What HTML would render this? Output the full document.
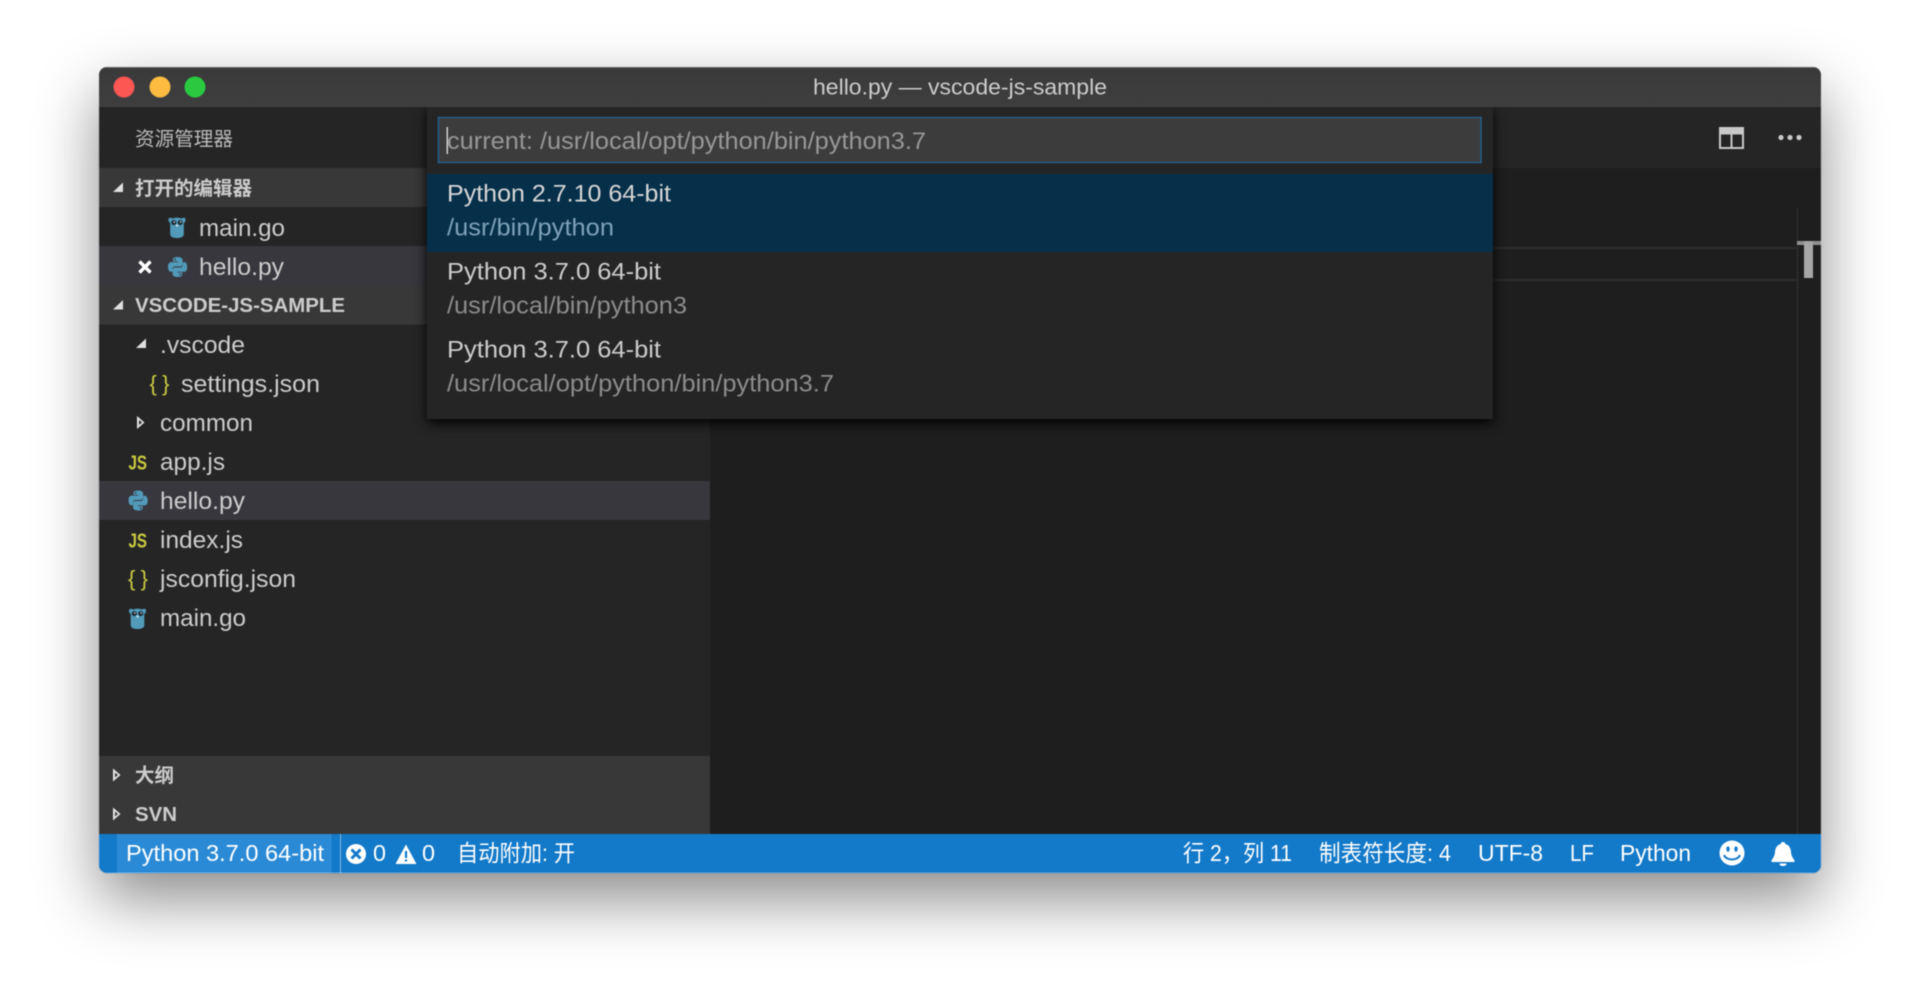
<!DOCTYPE html>
<html><head><meta charset="utf-8"><title>hello.py — vscode-js-sample</title>
<style>
html,body{margin:0;padding:0;width:1920px;height:1004px;background:#fff;overflow:hidden}
#shadow{position:absolute;left:99px;top:67px;width:1722px;height:806px;border-radius:8px;box-shadow:0 26px 62px rgba(0,0,0,.46)}
svg{position:absolute;left:0;top:0;filter:blur(.45px)}
text{font-family:"Liberation Sans","Noto Sans CJK SC",sans-serif;font-size:24px;fill:#ccc}
.b{font-weight:700;font-size:20px}
.s{fill:#fff;font-size:23px}
.q{font-size:24px}
.d{font-size:24px;fill:#8c8c8c}
</style></head><body>
<div id="shadow"></div>
<svg width="1920" height="1004" viewBox="0 0 1920 1004" xmlns="http://www.w3.org/2000/svg">
<defs>
<clipPath id="w"><rect x="99" y="67" width="1722" height="806" rx="8"/></clipPath>
<linearGradient id="tb" x1="0" y1="0" x2="0" y2="1"><stop offset="0" stop-color="#3a3a3a"/><stop offset="1" stop-color="#3e3e3e"/></linearGradient>
<g id="py"><path fill="#519aba" d="M9.6 0C4.7 0 5 2.1 5 2.1v2.3h4.7v.7H3.2S0 4.7 0 9.8s2.8 4.9 2.8 4.9h1.7v-2.4s-.1-2.8 2.8-2.8h4.7s2.6 0 2.6-2.6V2.7S14.6 0 9.6 0zM7 1.5a.9.9 0 1 1 0 1.8.9.9 0 0 1 0-1.8z"/><path fill="#519aba" d="M9.6 20c4.9 0 4.6-2.1 4.6-2.1v-2.3H9.5v-.7H16s3.2.4 3.2-4.7-2.8-4.9-2.8-4.9h-1.7v2.4s.1 2.8-2.8 2.8H7.2s-2.6 0-2.6 2.6v4.2S4.6 20 9.6 20zm2.6-1.5a.9.9 0 1 1 0-1.8.9.9 0 0 1 0 1.8z"/></g>
<g id="go"><path fill="#519aba" d="M2.2 6C-.2 4.500-.2 1.200 2 .8c1-.2 2 .2 2.600.9C5.600 1 7 .6 9 .6s3.400 .4 4.400 1.100C14 1 15 .6 16 .8c2.200 .4 2.200 3.700-.2 5.200V17c0 2.800-2.500 4-6.800 4s-6.800-1.200-6.800-4z"/><circle cx="5.800" cy="5.600" r="2.500" fill="#1f2a33"/><circle cx="12.200" cy="5.600" r="2.500" fill="#1f2a33"/><circle cx="6.300" cy="5" r=".8" fill="#cfe3ee"/><circle cx="12.700" cy="5" r=".8" fill="#cfe3ee"/><rect x="8" y="7.500" width="2" height="2" fill="#cfe3ee"/></g>
<path id="open" d="M10 0V9.500H0z" fill="#e0e0e0"/>
<path id="closed" fill="#e4e4e4" fill-rule="evenodd" d="M0 0L7.500 6.500 0 13zM2 4v5L5 6.500z"/>
</defs>

<g clip-path="url(#w)">
<rect x="99" y="67" width="1722" height="806" fill="#1e1e1e"/>
<!-- sidebar -->
<rect x="99" y="107" width="611" height="727" fill="#252526"/>
<rect x="99" y="168" width="611" height="39" fill="#383838"/>
<rect x="99" y="246" width="611" height="39" fill="#37373d"/>
<rect x="99" y="285" width="611" height="39.500" fill="#383838"/>
<rect x="99" y="481" width="611" height="39" fill="#37373d"/>
<rect x="99" y="756" width="611" height="78" fill="#383838"/>
<!-- editor header -->
<rect x="710" y="107" width="1111" height="61" fill="#252526"/>
<rect x="710" y="247" width="1087" height="2" fill="#2c2c2c"/>
<rect x="710" y="279" width="1087" height="2" fill="#2c2c2c"/>
<rect x="1797" y="208" width="1" height="626" fill="#333"/>
<rect x="1797" y="241" width="24" height="4" fill="#8f8f8f"/>
<rect x="1804" y="241" width="9" height="37" fill="#a6a6a6"/>
<!-- status -->
<rect x="99" y="834" width="1722" height="39" fill="#1379c9"/>
<rect x="117" y="834" width="214.500" height="39" fill="#2a8ad6"/>
<rect x="340" y="834" width="1" height="39" fill="#7fb8e6"/>
</g>

<text x="135" y="145.500" textLength="98" lengthAdjust="spacingAndGlyphs" style="font-size:19.500px;fill:#bbb">资源管理器</text>
<use href="#open" x="113" y="182.500"/>
<text class="b" x="135" y="195" textLength="117" lengthAdjust="spacingAndGlyphs" style="font-size:19.500px">打开的编辑器</text>
<use href="#go" x="168" y="217"/>
<text x="199" y="236" textLength="86" lengthAdjust="spacingAndGlyphs">main.go</text>
<path d="M139.500 261.500L150.500 272.500M150.500 261.500L139.500 272.500" stroke="#fff" stroke-width="3.400" fill="none"/>
<use href="#py" x="168" y="257"/>
<text x="199" y="275" textLength="85" lengthAdjust="spacingAndGlyphs">hello.py</text>
<use href="#open" x="113" y="300"/>
<text class="b" x="135" y="312" textLength="210" lengthAdjust="spacingAndGlyphs">VSCODE-JS-SAMPLE</text>

<use href="#open" x="136" y="338.500"/>
<text x="160" y="353" textLength="85" lengthAdjust="spacingAndGlyphs">.vscode</text>
<text x="149.500" y="391" style="font-size:22px;fill:#cbcb41" textLength="20" lengthAdjust="spacing" xml:space="preserve">{ }</text>
<text x="181" y="392" textLength="139" lengthAdjust="spacingAndGlyphs">settings.json</text>
<use href="#closed" x="137" y="416"/>
<text x="160" y="431" textLength="93" lengthAdjust="spacingAndGlyphs">common</text>
<text x="128.500" y="469.500" style="font-size:20px;fill:#cbcb41;font-weight:700" textLength="18.500" lengthAdjust="spacingAndGlyphs">JS</text>
<text x="160" y="470" textLength="65" lengthAdjust="spacingAndGlyphs">app.js</text>
<use href="#py" x="128.500" y="490.500"/>
<text x="160" y="509" textLength="85" lengthAdjust="spacingAndGlyphs">hello.py</text>
<text x="128.500" y="547.500" style="font-size:20px;fill:#cbcb41;font-weight:700" textLength="18.500" lengthAdjust="spacingAndGlyphs">JS</text>
<text x="160" y="548" textLength="83" lengthAdjust="spacingAndGlyphs">index.js</text>
<text x="128" y="586" style="font-size:22px;fill:#cbcb41" textLength="20" lengthAdjust="spacing" xml:space="preserve">{ }</text>
<text x="160" y="587" textLength="136" lengthAdjust="spacingAndGlyphs">jsconfig.json</text>
<use href="#go" x="128.500" y="608"/>
<text x="160" y="626" textLength="86" lengthAdjust="spacingAndGlyphs">main.go</text>

<use href="#closed" x="113" y="768.500"/>
<text class="b" x="135" y="782" textLength="39" lengthAdjust="spacingAndGlyphs" style="font-size:19.500px">大纲</text>
<use href="#closed" x="113" y="807.500"/>
<text class="b" x="135" y="821" textLength="42" lengthAdjust="spacingAndGlyphs">SVN</text>

<!-- header icons -->
<path d="M1720 128h23v20h-23zM1731.500 134v14M1720 133.500h23" fill="none" stroke="#c8c8c8" stroke-width="2"/>
<rect x="1720" y="128" width="23" height="5" fill="#c8c8c8"/>
<circle cx="1781" cy="137.500" r="2.600" fill="#c8c8c8"/><circle cx="1790" cy="137.500" r="2.600" fill="#c8c8c8"/><circle cx="1799" cy="137.500" r="2.600" fill="#c8c8c8"/>

<!-- quick pick -->
<rect x="427" y="107" width="1066" height="312" fill="#252526" style="filter:drop-shadow(0 4px 6px #000)"/>
<rect x="438.500" y="117.500" width="1042.500" height="45" fill="#3c3c3c" stroke="#215f8b" stroke-width="1.500"/>
<rect x="446.500" y="127" width="1.500" height="27" fill="#d0d0d0"/>
<text x="447" y="149" class="q" textLength="479" lengthAdjust="spacingAndGlyphs" style="fill:#979797">current: /usr/local/opt/python/bin/python3.7</text>
<rect x="427" y="174" width="1066" height="78" fill="#062f4a"/>
<text x="447" y="201.500" class="q" textLength="224" lengthAdjust="spacingAndGlyphs" style="fill:#d6d6d6">Python 2.7.10 64-bit</text>
<text x="447" y="235.500" class="d" textLength="167" lengthAdjust="spacingAndGlyphs" style="fill:#7ea1b8">/usr/bin/python</text>
<text x="447" y="279.500" class="q" textLength="214" lengthAdjust="spacingAndGlyphs">Python 3.7.0 64-bit</text>
<text x="447" y="313.500" class="d" textLength="240" lengthAdjust="spacingAndGlyphs">/usr/local/bin/python3</text>
<text x="447" y="357.500" class="q" textLength="214" lengthAdjust="spacingAndGlyphs">Python 3.7.0 64-bit</text>
<text x="447" y="391.500" class="d" textLength="387" lengthAdjust="spacingAndGlyphs">/usr/local/opt/python/bin/python3.7</text>

<!-- title, drawn over the quick pick shadow -->
<g clip-path="url(#w)">
<rect x="99" y="67" width="1722" height="40" fill="url(#tb)"/>
<rect x="99" y="67" width="1722" height="1" fill="#5c5c5c"/>
</g>
<circle cx="124" cy="87" r="10.500" fill="#fc5753"/>
<circle cx="160" cy="87" r="10.500" fill="#fdbc40"/>
<circle cx="195" cy="87" r="10.500" fill="#2ac940"/>
<text x="813" y="94.500" textLength="294" lengthAdjust="spacingAndGlyphs" style="font-size:22.500px">hello.py — vscode-js-sample</text>

<!-- status -->
<text class="s" x="126" y="861" textLength="198" lengthAdjust="spacingAndGlyphs">Python 3.7.0 64-bit</text>
<circle cx="356" cy="854" r="10" fill="#fff"/>
<path d="M351.500 849.500l9 9M360.500 849.500l-9 9" stroke="#1379c9" stroke-width="3" fill="none"/>
<text class="s" x="373" y="861" textLength="13" lengthAdjust="spacingAndGlyphs">0</text>
<path d="M406 844.500L416.500 864H395.500z" fill="#fff"/>
<path d="M406 851v7M406 859.500v2" stroke="#1379c9" stroke-width="2.200" fill="none"/>
<text class="s" x="422" y="861" textLength="13" lengthAdjust="spacingAndGlyphs">0</text>
<text class="s" x="457" y="861" textLength="118" lengthAdjust="spacingAndGlyphs">自动附加: 开</text>
<text class="s" x="1183" y="861" textLength="109" lengthAdjust="spacingAndGlyphs">行 2，列 11</text>
<text class="s" x="1319" y="861" textLength="132" lengthAdjust="spacingAndGlyphs">制表符长度: 4</text>
<text class="s" x="1478" y="861" textLength="65" lengthAdjust="spacingAndGlyphs">UTF-8</text>
<text class="s" x="1570" y="861" textLength="24" lengthAdjust="spacingAndGlyphs">LF</text>
<text class="s" x="1620" y="861" textLength="71" lengthAdjust="spacingAndGlyphs">Python</text>
<circle cx="1732" cy="853" r="12.500" fill="#fff"/>
<ellipse cx="1728" cy="849" rx="1.700" ry="2.800" fill="#1379c9"/><ellipse cx="1736" cy="849" rx="1.700" ry="2.800" fill="#1379c9"/>
<path d="M1724 855c2 6 14 6 16 0" stroke="#1379c9" stroke-width="2" fill="none"/>
<path d="M1783 842c1.500 0 2.300 1 2.300 2 4 1 5.500 4.500 5.700 8 .2 4 2 6 3.500 8.500v1.500h-23v-1.500c1.500-2.500 3.300-4.500 3.500-8.500.2-3.500 1.700-7 5.700-8 0-1 .8-2 2.300-2z" fill="#fff"/>
<path d="M1779.500 863.500h7c0 2-1.500 2.500-3.500 2.500s-3.500-.5-3.500-2.500z" fill="#fff"/>
</svg>
</body></html>
